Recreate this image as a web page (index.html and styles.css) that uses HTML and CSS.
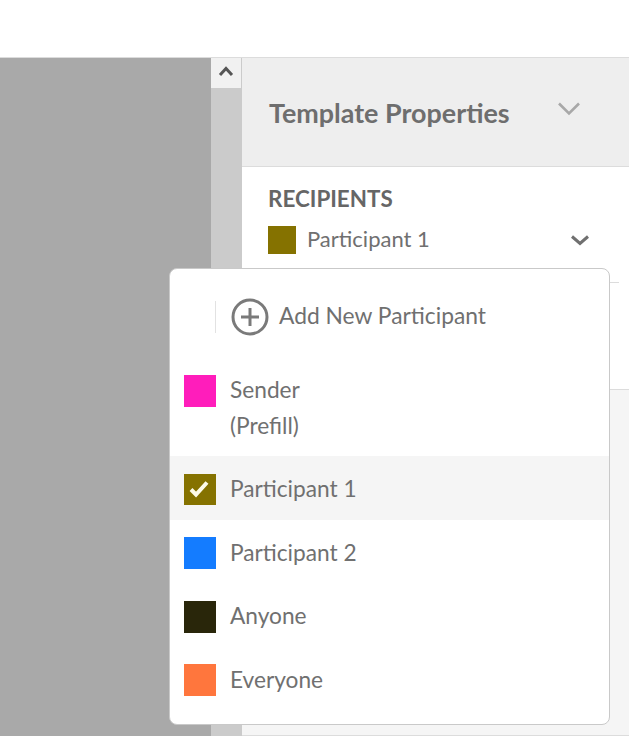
FILE: index.html
```html
<!DOCTYPE html>
<html lang="en">
<head>
<meta charset="utf-8">
<title>Template Properties</title>
<link rel="stylesheet" href="styles.css">
</head>
<body>
<header class="topbar"></header>
<main class="workspace">
  <div class="canvas"></div>
  <div class="scrollbar">
    <button class="scroll-up" aria-label="Scroll up">
      <svg width="16" height="12" viewBox="0 0 16 12"><path d="M2 10 8 3.5l6 6.5" fill="none" stroke="#555" stroke-width="3"/></svg>
    </button>
  </div>
  <aside class="panel">
    <div class="panel-head">
      <h1 class="panel-title">Template Properties</h1>
      <svg class="panel-chevron" width="24" height="16" viewBox="0 0 24 16"><path d="M2 2.5 12 12.5 22 2.5" fill="none" stroke="#a8a8a8" stroke-width="2.6"/></svg>
    </div>
    <section class="recipients">
      <h2 class="recipients-title">RECIPIENTS</h2>
      <div class="recipient-row">
        <span class="swatch swatch-small swatch-olive"></span>
        <span class="recipient-name">Participant 1</span>
        <svg class="recipient-chevron" width="20" height="12" viewBox="0 0 20 12"><path d="M2 2.5 10 9.5l8-7" fill="none" stroke="#707070" stroke-width="3"/></svg>
      </div>
      <div class="recipient-space"></div>
    </section>
    <div class="panel-rest"></div>
  </aside>
</main>

<div class="menu">
  <div class="add-row">
    <span class="add-divider"></span>
    <svg class="add-icon" width="38" height="38" viewBox="0 0 38 38"><circle cx="19" cy="19" r="17" fill="none" stroke="#7a7a7a" stroke-width="3"/><path d="M19 10v18M10 19h18" fill="none" stroke="#7a7a7a" stroke-width="3"/></svg>
    <span class="add-label">Add New Participant</span>
  </div>
  <div class="menu-item menu-item-tall">
    <span class="swatch swatch-pink"></span>
    <span class="item-label">Sender<br>(Prefill)</span>
  </div>
  <div class="menu-item menu-item-selected">
    <span class="swatch swatch-olive">
      <svg class="check" width="32" height="31" viewBox="0 0 32 31"><path d="M7 15.5l5 5L23 8.5" fill="none" stroke="#fdfbe8" stroke-width="4"/></svg>
    </span>
    <span class="item-label item-label-low">Participant 1</span>
  </div>
  <div class="menu-item">
    <span class="swatch swatch-blue"></span>
    <span class="item-label item-label-low">Participant 2</span>
  </div>
  <div class="menu-item">
    <span class="swatch swatch-dark"></span>
    <span class="item-label">Anyone</span>
  </div>
  <div class="menu-item">
    <span class="swatch swatch-orange"></span>
    <span class="item-label">Everyone</span>
  </div>
</div>
</body>
</html>
```

FILE: styles.css
```css
* { box-sizing: border-box; }
html, body { margin: 0; height: 100%; overflow: hidden; }
body {
  position: relative;
  display: flex;
  flex-direction: column;
  background: #fff;
  color: #6e6e6e;
  font-family: "Lato", "Open Sans", sans-serif;
}
.topbar { height: 58px; flex: none; background: #fff; border-bottom: 1px solid #dcdcdc; }
.workspace { flex: 1; display: flex; min-height: 0; }
.canvas { width: 211px; flex: none; background: #a9a9a9; }
.scrollbar { width: 31px; flex: none; background: #cbcbcb; }
.scroll-up {
  display: flex; align-items: center; justify-content: center;
  width: 30px; height: 30px; padding: 0 0 4px; border: 0; background: #f1f1f1;
}
.panel { flex: 1; display: flex; flex-direction: column; min-width: 0; }
.panel-head {
  height: 109px; flex: none; display: flex; align-items: flex-start;
  padding: 37px 0 0 27px; background: #eeeeee; border-bottom: 1px solid #dcdcdc;
}
.panel-title { margin: 0; font-size: 26.9px; line-height: 36px; font-weight: 700; color: #6e6e6e; }
.panel-chevron { margin: 6px 0 0 47px; }
.recipients { background: #fff; padding: 18px 0 0 26px; border-bottom: 1px solid #dcdcdc; }
.recipients-title { margin: 0; font-size: 22.4px; line-height: 28px; font-weight: 700; color: #666; }
.recipient-row {
  display: flex; align-items: center; height: 28px; margin-top: 13px; margin-right: 10px;
}
.swatch-small.swatch-small { width: 28px; height: 28px; margin-top: 0; }
.recipient-name { margin: 0 0 3px 11px; font-size: 22px; color: #707070; }
.recipient-chevron { margin-left: auto; margin-right: 29px; }
.recipient-space { height: 107px; margin-right: 10px; border-top: 1px solid #dcdcdc; margin-top: 28px; }
.panel-rest { flex: 1; background: #f5f5f5; border-bottom: 1px solid #dcdcdc; }

.menu {
  position: absolute; left: 169px; top: 268px; width: 441px; height: 457px;
  background: #fff; border: 1px solid #c9c9c9; border-radius: 8px; overflow: hidden;
}
.add-row { display: flex; align-items: center; height: 95px; padding: 0 0 0 45px; }
.add-divider { width: 1px; height: 32px; background: #e2e2e2; flex: none; }
.add-icon { margin-left: 15px; flex: none; }
.add-label { margin: 0 0 4px 10px; font-size: 22.8px; color: #707070; }
.menu-item { display: flex; align-items: center; height: 64px; padding-left: 14px; }
.menu-item-tall { height: 92px; align-items: flex-start; padding-top: 11px; }
.menu-item-selected { background: #f5f5f5; }
.swatch { width: 32px; height: 32px; flex: none; display: block; align-self: flex-start; }
.menu-item-tall .item-label { margin-top: -3px; }
.item-label-low { margin-top: 2px; }
.check { display: block; }
.swatch-pink { background: #ff1dbb; }
.swatch-olive { background: #857200; height: 31px; margin-top: 18px; }
.swatch-blue { background: #147cff; margin-top: 17px; }
.swatch-dark { background: #29260a; margin-top: 17px; }
.swatch-orange { background: #ff763d; margin-top: 16px; }
.item-label { margin-left: 14px; font-size: 22.7px; line-height: 36px; color: #707070; }
```
